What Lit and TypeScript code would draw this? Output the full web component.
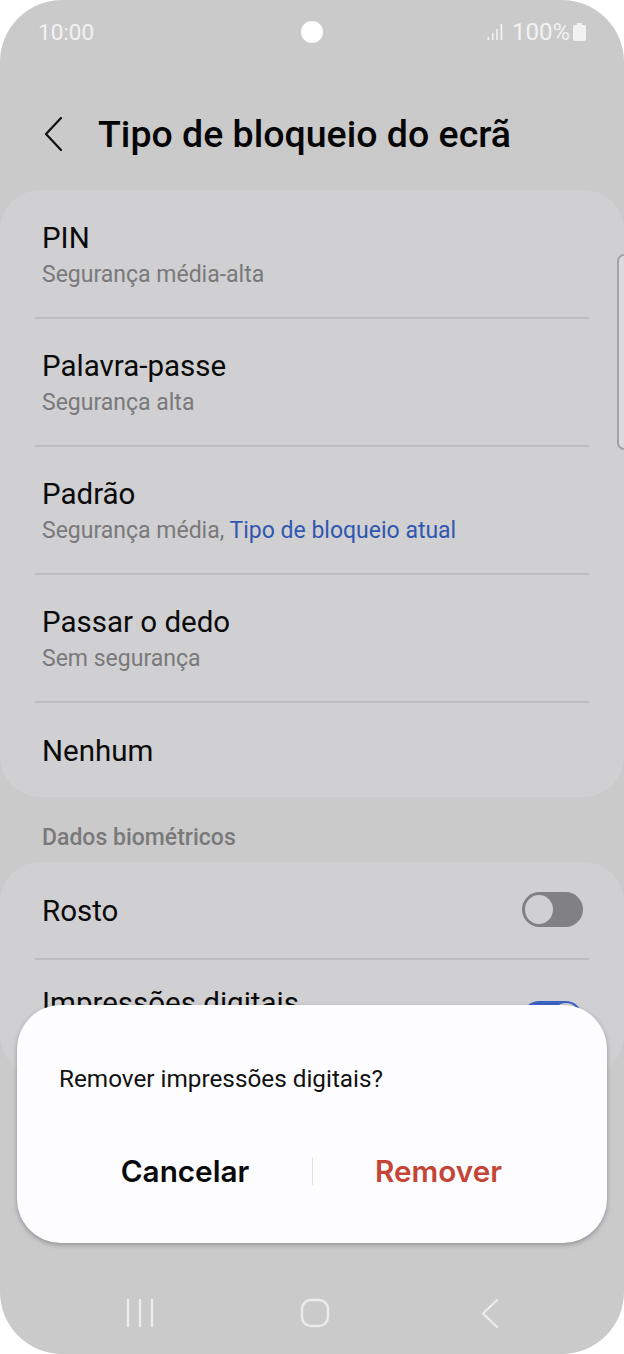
import { LitElement, css, html, svg } from "lit";
import { customElement } from "lit/decorators.js";

type Row = {
  title: string;
  sub?: string;
  note?: string;
};

const lockTypes: Row[] = [
  { title: "PIN", sub: "Segurança média-alta" },
  { title: "Palavra-passe", sub: "Segurança alta" },
  { title: "Padrão", sub: "Segurança média, ", note: "Tipo de bloqueio atual" },
  { title: "Passar o dedo", sub: "Sem segurança" },
  { title: "Nenhum" },
];

@customElement("app-root")
export class AppRoot extends LitElement {
  static styles = css`
    :host {
      display: block;
      background: #fff;
      font-family: Roboto, "Noto Sans", sans-serif;
    }
    .screen {
      position: relative;
      height: 1354px;
      display: flex;
      flex-direction: column;
      overflow: hidden;
      border-radius: 62px;
      background: #cacaca;
    }
    .status {
      height: 64px;
      flex: none;
      display: grid;
      grid-template-columns: 1fr auto 1fr;
      align-items: center;
      padding: 0 38px;
      color: #f2f2f2;
      font-size: 22.5px;
    }
    .camera {
      width: 22px;
      height: 22px;
      border-radius: 50%;
      background: #fff;
    }
    .status-right {
      display: flex;
      justify-content: flex-end;
      align-items: center;
      font-size: 24px;
    }
    .status-right .signal {
      margin: 0 9px 0 0;
    }
    .status-right .battery {
      margin: 0 0 0 3px;
    }
    .header {
      height: 126px;
      flex: none;
      box-sizing: border-box;
      padding: 14px 0 0 43px;
      display: flex;
      align-items: center;
      gap: 33px;
    }
    .header h1 {
      margin: 0;
      font-size: 37.5px;
      font-weight: 500;
      color: #050505;
    }
    .card {
      flex: none;
      background: #d0d0d2;
      border-radius: 40px;
    }
    .row {
      margin: 0 35px;
      padding: 1px 7px 0;
      border-top: 2px solid #bdbdbf;
      box-sizing: border-box;
      height: 128px;
      display: flex;
      flex-direction: column;
      justify-content: center;
    }
    .row:first-child {
      border-top: none;
      height: 127px;
    }
    .row.single {
      height: 96px;
    }
    .title {
      font-size: 29.5px;
      line-height: 36px;
      color: #0a0a0a;
    }
    .sub {
      font-size: 23px;
      line-height: 28px;
      margin-top: 5px;
      color: #79797a;
    }
    .sub span {
      color: #2f57b0;
    }
    .section {
      flex: none;
      height: 65px;
      box-sizing: border-box;
      padding: 28px 0 0 42px;
      font-size: 23px;
      line-height: 26px;
      font-weight: 500;
      color: #79797a;
    }
    .row.toggle-row {
      flex-direction: row;
      justify-content: space-between;
      align-items: center;
      height: 117px;
      padding: 0 7px;
    }
    .row.toggle-row:first-child {
      height: 96px;
    }
    .toggle-row:first-child .title {
      margin-top: 2px;
    }
    .toggle-row:first-child .toggle {
      margin-bottom: 2px;
    }
    .toggle-row.tall {
      align-items: flex-start;
    }
    .toggle-row.tall .title {
      margin-top: 25px;
    }
    .toggle-row.tall .toggle {
      margin-top: 41px;
    }
    .toggle {
      width: 61px;
      height: 35px;
      box-sizing: border-box;
      border-radius: 18px;
      background: #818184;
      padding: 3px;
      margin-right: -1px;
      display: flex;
    }
    .toggle i {
      display: block;
      width: 28px;
      height: 29px;
      border-radius: 50%;
      background: #d0d0d2;
    }
    .toggle.on {
      background: #3d63c4;
      justify-content: flex-end;
      padding: 2px 3px;
    }
    .scrollbar {
      position: absolute;
      top: 254px;
      right: -7px;
      width: 14px;
      height: 196px;
      box-sizing: border-box;
      border: 2px solid #a3a3a5;
      border-radius: 8px;
      background: #dadadc;
    }
    .dialog {
      position: absolute;
      left: 17px;
      right: 17px;
      top: 1005px;
      height: 238px;
      box-sizing: border-box;
      background: #fdfdff;
      border-radius: 44px;
      box-shadow: 0 2px 5px rgba(0, 0, 0, 0.28);
      padding: 57px 0 0 42px;
    }
    .dialog p {
      margin: 0;
      font-size: 24.3px;
      line-height: 34px;
      color: #111;
    }
    .actions {
      display: flex;
      align-items: center;
      margin: 55px 0 0 -42px;
      padding-left: 41px;
    }
    .actions button {
      flex: none;
      width: 254px;
      border: none;
      background: none;
      padding: 0;
      font: 600 29.7px/40px Inter, Roboto, sans-serif;
      color: #0a0a0a;
    }
    .actions .danger {
      width: 251px;
      color: #c44536;
    }
    .actions .rule {
      flex: none;
      width: 1px;
      height: 28px;
      background: #e4e4e6;
    }
    .nav {
      position: absolute;
      left: 0;
      right: 0;
      bottom: 0;
      height: 84px;
    }
  `;

  private renderRow(r: Row) {
    return html`
      <div class="row ${r.sub ? "" : "single"}">
        <div class="title">${r.title}</div>
        ${r.sub ? html`<div class="sub">${r.sub}${r.note ? html`<span>${r.note}</span>` : ""}</div>` : ""}
      </div>
    `;
  }

  private navIcons() {
    return svg`
      <g fill="none" stroke="#ececec" stroke-width="2.4" stroke-linecap="round" stroke-linejoin="round">
        <path d="M128 1300v26M140 1300v26M152 1300v26" />
        <rect x="302" y="1300" width="26" height="26" rx="9" />
        <path d="M497 1300l-14 13.5 14 13.5" />
      </g>
    `;
  }

  render() {
    return html`
      <div class="screen">
        <div class="status">
          <span>10:00</span>
          <span class="camera"></span>
          <div class="status-right">
            <svg class="signal" width="16" height="16" viewBox="0 0 16 16" fill="#f2f2f2">
              <rect x="0.5" y="13" width="1.8" height="3" />
              <rect x="5" y="9" width="1.6" height="7" />
              <rect x="9.2" y="5" width="1.6" height="11" />
              <rect x="13.5" y="0" width="1.8" height="16" />
            </svg>
            <span>100%</span>
            <svg class="battery" width="13" height="18" viewBox="0 0 13 18" fill="#f2f2f2">
              <path d="M4 0h5v2h2a2 2 0 0 1 2 2v12a2 2 0 0 1-2 2H2a2 2 0 0 1-2-2V4a2 2 0 0 1 2-2h2z" />
            </svg>
          </div>
        </div>
        <div class="header">
          <svg width="22" height="34" viewBox="0 0 22 34" fill="none" stroke="#111" stroke-width="2.2" stroke-linecap="round" stroke-linejoin="round">
            <path d="M18 1L3 17l15 16" />
          </svg>
          <h1>Tipo de bloqueio do ecrã</h1>
        </div>
        <div class="card">${lockTypes.map((r) => this.renderRow(r))}</div>
        <div class="section">Dados biométricos</div>
        <div class="card">
          <div class="row toggle-row">
            <span class="title">Rosto</span>
            <span class="toggle"><i></i></span>
          </div>
          <div class="row toggle-row tall">
            <span class="title">Impressões digitais</span>
            <span class="toggle on"><i></i></span>
          </div>
        </div>
        <div class="scrollbar"></div>
        <div class="dialog">
          <p>Remover impressões digitais?</p>
          <div class="actions">
            <button>Cancelar</button>
            <span class="rule"></span>
            <button class="danger">Remover</button>
          </div>
        </div>
        <svg class="nav" width="624" height="84" viewBox="0 1270 624 84">${this.navIcons()}</svg>
      </div>
    `;
  }
}
